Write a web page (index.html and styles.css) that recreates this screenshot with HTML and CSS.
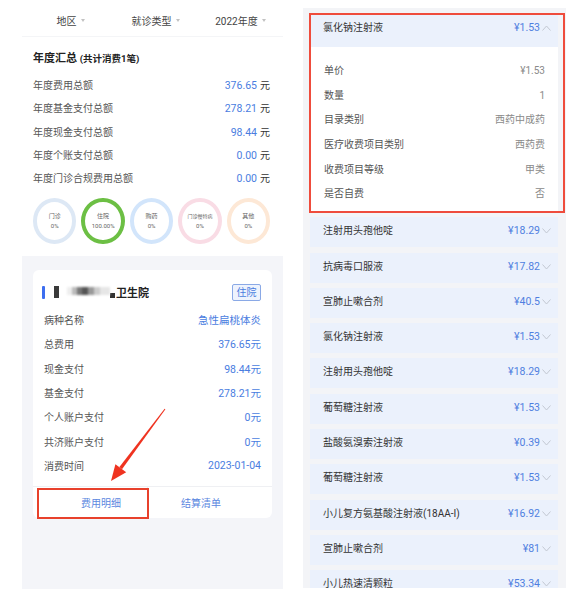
FILE: index.html
```html
<!DOCTYPE html>
<html lang="zh">
<head>
<meta charset="utf-8">
<link rel="stylesheet" href="styles.css">
</head>
<body>
<div class="left">
  <div class="filters">
    <div class="filter">地区<i class="caret"></i></div>
    <div class="filter">就诊类型<i class="caret"></i></div>
    <div class="filter">2022年度<i class="caret"></i></div>
  </div>
  <div class="summary">
    <div class="sum-title">年度汇总 <span class="sum-count">(共计消费1笔)</span></div>
    <div class="sum-row"><span>年度费用总额</span><span><b class="amt">376.65</b><span class="unit">元</span></span></div>
    <div class="sum-row"><span>年度基金支付总额</span><span><b class="amt">278.21</b><span class="unit">元</span></span></div>
    <div class="sum-row"><span>年度现金支付总额</span><span><b class="amt">98.44</b><span class="unit">元</span></span></div>
    <div class="sum-row"><span>年度个账支付总额</span><span><b class="amt">0.00</b><span class="unit">元</span></span></div>
    <div class="sum-row"><span>年度门诊合规费用总额</span><span><b class="amt">0.00</b><span class="unit">元</span></span></div>
    <div class="rings">
      <div class="ring r-mz"><span>门诊</span><span>0%</span></div>
      <div class="ring r-zy"><span>住院</span><span>100.00%</span></div>
      <div class="ring r-gy"><span>购药</span><span>0%</span></div>
      <div class="ring r-mt"><span class="tiny">门诊慢特病</span><span>0%</span></div>
      <div class="ring r-qt"><span>其他</span><span>0%</span></div>
    </div>
  </div>
  <div class="records">
    <div class="card">
      <div class="card-head">
        <div class="hosp">
          <i class="bar"></i>
          <i class="blk1"></i>
          <i class="mosaic"></i>
          <i class="blk2"></i>
          <span class="hosp-name">卫生院</span>
        </div>
        <span class="tag">住院</span>
      </div>
      <div class="card-rows">
        <div class="c-row"><span>病种名称</span><span class="val">急性扁桃体炎</span></div>
        <div class="c-row"><span>总费用</span><span class="val">376.65元</span></div>
        <div class="c-row"><span>现金支付</span><span class="val">98.44元</span></div>
        <div class="c-row"><span>基金支付</span><span class="val">278.21元</span></div>
        <div class="c-row"><span>个人账户支付</span><span class="val">0元</span></div>
        <div class="c-row"><span>共济账户支付</span><span class="val">0元</span></div>
        <div class="c-row"><span>消费时间</span><span class="val">2023-01-04</span></div>
      </div>
      <div class="card-foot">
        <div class="btn btn-l">费用明细</div>
        <div class="btn btn-r">结算清单</div>
      </div>
      <div class="mark-box"></div>
      <svg class="arrow" width="239" height="247" viewBox="0 0 239 247">
        <polygon points="132.4,139.3 131.6,138.7 86.4,197.0 89.0,199.2" fill="#ef3320"/>
        <polygon points="78,211 93.2,202.2 82.4,194.2" fill="#ef3320"/>
      </svg>
    </div>
  </div>
</div>

<div class="right">
  <div class="item open">
    <div class="item-head"><span class="name">氯化钠注射液</span><span class="price">¥1.53<svg class="chev" width="9" height="6" viewBox="0 0 9 6"><polyline points="0.5,5.5 4.5,1 8.5,5.5" fill="none" stroke="#c3c8d2" stroke-width="1"/></svg></span></div>
    <div class="item-body">
      <div class="d-row"><span>单价</span><span class="d-val">¥1.53</span></div>
      <div class="d-row"><span>数量</span><span class="d-val">1</span></div>
      <div class="d-row"><span>目录类别</span><span class="d-val">西药中成药</span></div>
      <div class="d-row"><span>医疗收费项目类别</span><span class="d-val">西药费</span></div>
      <div class="d-row"><span>收费项目等级</span><span class="d-val">甲类</span></div>
      <div class="d-row"><span>是否自费</span><span class="d-val">否</span></div>
    </div>
  </div>
  <div class="item"><span class="name">注射用头孢他啶</span><span class="price">¥18.29<svg class="chev" width="9" height="6" viewBox="0 0 9 6"><polyline points="0.5,0.5 4.5,5 8.5,0.5" fill="none" stroke="#c3c8d2" stroke-width="1"/></svg></span></div>
  <div class="item"><span class="name">抗病毒口服液</span><span class="price">¥17.82<svg class="chev" width="9" height="6" viewBox="0 0 9 6"><polyline points="0.5,0.5 4.5,5 8.5,0.5" fill="none" stroke="#c3c8d2" stroke-width="1"/></svg></span></div>
  <div class="item"><span class="name">宣肺止嗽合剂</span><span class="price">¥40.5<svg class="chev" width="9" height="6" viewBox="0 0 9 6"><polyline points="0.5,0.5 4.5,5 8.5,0.5" fill="none" stroke="#c3c8d2" stroke-width="1"/></svg></span></div>
  <div class="item"><span class="name">氯化钠注射液</span><span class="price">¥1.53<svg class="chev" width="9" height="6" viewBox="0 0 9 6"><polyline points="0.5,0.5 4.5,5 8.5,0.5" fill="none" stroke="#c3c8d2" stroke-width="1"/></svg></span></div>
  <div class="item"><span class="name">注射用头孢他啶</span><span class="price">¥18.29<svg class="chev" width="9" height="6" viewBox="0 0 9 6"><polyline points="0.5,0.5 4.5,5 8.5,0.5" fill="none" stroke="#c3c8d2" stroke-width="1"/></svg></span></div>
  <div class="item"><span class="name">葡萄糖注射液</span><span class="price">¥1.53<svg class="chev" width="9" height="6" viewBox="0 0 9 6"><polyline points="0.5,0.5 4.5,5 8.5,0.5" fill="none" stroke="#c3c8d2" stroke-width="1"/></svg></span></div>
  <div class="item"><span class="name">盐酸氨溴索注射液</span><span class="price">¥0.39<svg class="chev" width="9" height="6" viewBox="0 0 9 6"><polyline points="0.5,0.5 4.5,5 8.5,0.5" fill="none" stroke="#c3c8d2" stroke-width="1"/></svg></span></div>
  <div class="item"><span class="name">葡萄糖注射液</span><span class="price">¥1.53<svg class="chev" width="9" height="6" viewBox="0 0 9 6"><polyline points="0.5,0.5 4.5,5 8.5,0.5" fill="none" stroke="#c3c8d2" stroke-width="1"/></svg></span></div>
  <div class="item"><span class="name">小儿复方氨基酸注射液(18AA-I)</span><span class="price">¥16.92<svg class="chev" width="9" height="6" viewBox="0 0 9 6"><polyline points="0.5,0.5 4.5,5 8.5,0.5" fill="none" stroke="#c3c8d2" stroke-width="1"/></svg></span></div>
  <div class="item"><span class="name">宣肺止嗽合剂</span><span class="price">¥81<svg class="chev" width="9" height="6" viewBox="0 0 9 6"><polyline points="0.5,0.5 4.5,5 8.5,0.5" fill="none" stroke="#c3c8d2" stroke-width="1"/></svg></span></div>
  <div class="item"><span class="name">小儿热速清颗粒</span><span class="price">¥53.34<svg class="chev" width="9" height="6" viewBox="0 0 9 6"><polyline points="0.5,0.5 4.5,5 8.5,0.5" fill="none" stroke="#c3c8d2" stroke-width="1"/></svg></span></div>
  <div class="annot"></div>
</div>
</body>
</html>
```

FILE: styles.css
```css
* { box-sizing: border-box; margin: 0; padding: 0; }

body {
  width: 573px;
  height: 598px;
  overflow: hidden;
  background: #fff;
  display: flex;
  align-items: flex-start;
  font-family: Roboto, "Noto Sans CJK SC", "Noto Sans", sans-serif;
  color: #333;
}

/* ---------- left phone ---------- */
.left {
  margin-left: 22px;
  width: 261px;
  height: 589px;
  display: flex;
  flex-direction: column;
}

.filters {
  height: 37px;
  padding: 4px 0 0 6px;
  display: grid;
  grid-template-columns: repeat(3, 85px);
  align-items: center;
  font-size: 10px;
  color: #444;
  border-bottom: 1px solid #f4f5f7;
}

.filter {
  display: flex;
  justify-content: center;
  align-items: center;
}

.caret {
  display: inline-block;
  margin-left: 4px;
  border-left: 2.5px solid transparent;
  border-right: 2.5px solid transparent;
  border-top: 3px solid #c2c2c2;
}

.summary {
  padding: 14px 13px 12px 11px;
}

.sum-title {
  font-size: 11px;
  font-weight: 700;
  line-height: 16px;
  color: #222;
  margin-bottom: 6px;
}

.sum-count {
  font-size: 9.5px;
  font-weight: 700;
}

.sum-row {
  height: 23.3px;
  display: flex;
  justify-content: space-between;
  align-items: center;
  font-size: 10px;
  color: #555;
}

.amt {
  font-weight: 400;
  font-size: 10.5px;
  color: #4a7ddf;
}

.unit {
  margin-left: 3px;
  font-size: 10px;
  color: #333;
}

.rings {
  margin-top: 9px;
  display: flex;
  gap: 5px;
}

.ring {
  width: 44px;
  height: 46px;
  border-radius: 50%;
  border: 4px solid #dde8f5;
  display: flex;
  flex-direction: column;
  align-items: center;
  justify-content: center;
  gap: 2px;
  font-size: 6px;
  line-height: 8px;
  color: #666;
}

.ring .tiny { font-size: 5px; }

.r-zy { border-color: #6cbf44; }
.r-gy { border-color: #d2e5fb; }
.r-mt { border-color: #f9dce5; }
.r-qt { border-color: #fde8d6; }

.records {
  flex: 1;
  background: #f4f5f9;
  padding: 14px 11px;
}

.card {
  position: relative;
  background: #fff;
  border-radius: 6px;
}

.card-head {
  padding: 13px 11px 0 9px;
  height: 31px;
  display: flex;
  justify-content: space-between;
  align-items: center;
}

.hosp {
  display: flex;
  align-items: center;
}

.bar {
  width: 3px;
  height: 13px;
  border-radius: 1px;
  background: #3d6ef0;
}

.blk1 {
  width: 5px;
  height: 12px;
  margin-left: 9px;
  background: #3a3a3a;
  filter: blur(0.4px);
}

.mosaic {
  width: 43px;
  height: 8px;
  margin-left: 8px;
  margin-top: -3px;
  background: linear-gradient(90deg, #eee 0 12%, #bbb 12% 24%, #777 24% 36%, #555 36% 50%, #999 50% 62%, #ccc 62% 76%, #e6e6e6 76% 100%);
  filter: blur(1px);
}

.blk2 {
  width: 5px;
  height: 5px;
  margin-top: 6px;
  background: #333;
}

.hosp-name {
  font-size: 11px;
  font-weight: 700;
  color: #222;
  margin-left: 1px;
}

.tag {
  width: 29px;
  height: 17px;
  border: 1px solid #8aa9e6;
  border-radius: 2px;
  background: #eef3fd;
  color: #4a7ddf;
  font-size: 10px;
  line-height: 15px;
  text-align: center;
}

.card-rows {
  padding: 6px 11px 8px 11px;
}

.c-row {
  height: 24.3px;
  display: flex;
  justify-content: space-between;
  align-items: center;
  font-size: 10px;
  color: #555;
}

.c-row .val {
  color: #4a7ddf;
  font-size: 10.5px;
}

.card-foot {
  height: 32px;
  display: grid;
  grid-template-columns: 115px 1fr;
  border-top: 1px solid #eff0f3;
}

.btn {
  display: flex;
  align-items: center;
  font-size: 10px;
  color: #5b87e0;
}

.btn-l {
  padding-left: 48px;
  border-right: 1px solid #eff0f3;
}

.btn-r {
  padding-left: 33px;
}

.mark-box {
  position: absolute;
  left: 4px;
  top: 218px;
  width: 112px;
  height: 31px;
  border: 2px solid #e8412c;
}

.arrow {
  position: absolute;
  left: 0;
  top: 0;
  overflow: visible;
}

/* ---------- right phone ---------- */
.right {
  position: relative;
  margin-left: 20px;
  margin-top: 8px;
  width: 263px;
  height: 580px;
  overflow: hidden;
  background: #f3f4f7;
  padding: 6px 8px 0 7px;
}

.item {
  height: 30px;
  margin-top: 5.3px;
  padding: 6px 7px 0 13px;
  background: #ebf1fc;
  display: flex;
  justify-content: space-between;
  align-items: flex-start;
  line-height: 16px;
  font-size: 10px;
  color: #333;
}

.item.open {
  height: auto;
  margin-top: 0;
  padding: 0;
  display: block;
  background: #fff;
}

.item-head {
  height: 33px;
  padding: 6px 7px 0 13px;
  background: #ebf1fc;
  display: flex;
  justify-content: space-between;
  align-items: flex-start;
}

.price {
  display: flex;
  align-items: center;
  height: 16px;
  font-size: 10.5px;
  color: #4f7fe0;
}

.chev {
  margin-left: 2px;
}

.item-body {
  padding: 12px 13px 5px 14px;
  height: 165px;
}

.d-row {
  height: 24.6px;
  display: flex;
  justify-content: space-between;
  align-items: center;
  font-size: 10px;
  color: #555;
}

.d-val {
  color: #8a8a8a;
}

.annot {
  position: absolute;
  left: 6px;
  top: 5px;
  width: 256px;
  height: 200px;
  border: 2px solid #ef4c3c;
}
```
